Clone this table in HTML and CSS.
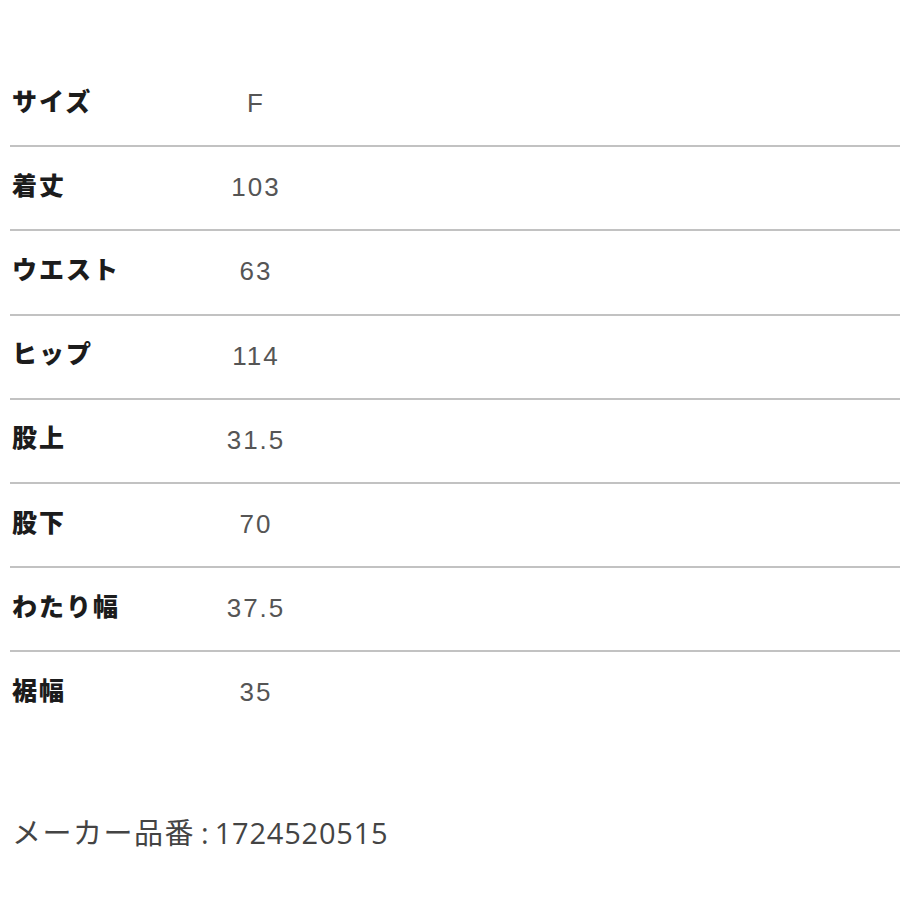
FILE: index.html
```html
<!DOCTYPE html>
<html lang="ja">
<head>
<meta charset="utf-8">
<title>サイズ表</title>
<link rel="stylesheet" href="styles.css">
</head>
<body>
<div class="page">
  <div class="table">
    <div class="row"><div class="label">サイズ</div><div class="value">F</div></div>
    <div class="row"><div class="label">着丈</div><div class="value">103</div></div>
    <div class="row"><div class="label">ウエスト</div><div class="value">63</div></div>
    <div class="row"><div class="label">ヒップ</div><div class="value">114</div></div>
    <div class="row"><div class="label">股上</div><div class="value">31.5</div></div>
    <div class="row"><div class="label">股下</div><div class="value">70</div></div>
    <div class="row"><div class="label">わたり幅</div><div class="value">37.5</div></div>
    <div class="row last"><div class="label">裾幅</div><div class="value">35</div></div>
  </div>
  <p class="code"><span class="code-jp">メーカー品番</span><span class="code-colon">:</span><span class="code-num">1724520515</span></p>
</div>
</body>
</html>
```
FILE: styles.css
```css
html, body {
  margin: 0;
  padding: 0;
  background: #ffffff;
}
.page {
  width: 900px;
  height: 900px;
  padding-top: 63px;
  box-sizing: border-box;
  overflow: hidden;
}
.table {
  margin-left: 10px;
}
.row {
  display: grid;
  grid-template-columns: 170px 150px;
  align-items: center;
  height: 82.2px;
  box-sizing: content-box;
  border-bottom: 2px solid #c2c2c2;
}
.row.last {
  border-bottom: none;
}
.label {
  padding-left: 2px;
  padding-bottom: 8px;
  font-family: "Noto Sans CJK JP", sans-serif;
  font-weight: 900;
  font-size: 25px;
  letter-spacing: 2px;
  line-height: 1;
  color: #1c1c1c;
}
.value {
  padding-bottom: 2px;
  padding-left: 2px;
  text-align: center;
  font-family: "Liberation Sans", Arial, sans-serif;
  font-size: 26px;
  letter-spacing: 2px;
  line-height: 1;
  color: #555555;
}
.code {
  margin: 82px 0 0 12px;
  line-height: 1;
  color: #444444;
  white-space: nowrap;
  font-size: 29px;
}
.code-jp {
  font-family: "Noto Sans CJK JP", sans-serif;
  letter-spacing: 1.5px;
}
.code-colon {
  font-family: "Open Sans", sans-serif;
  margin: 0 6px 0 6px;
}
.code-num {
  font-family: "Open Sans", sans-serif;
  letter-spacing: 0.8px;
}
```
